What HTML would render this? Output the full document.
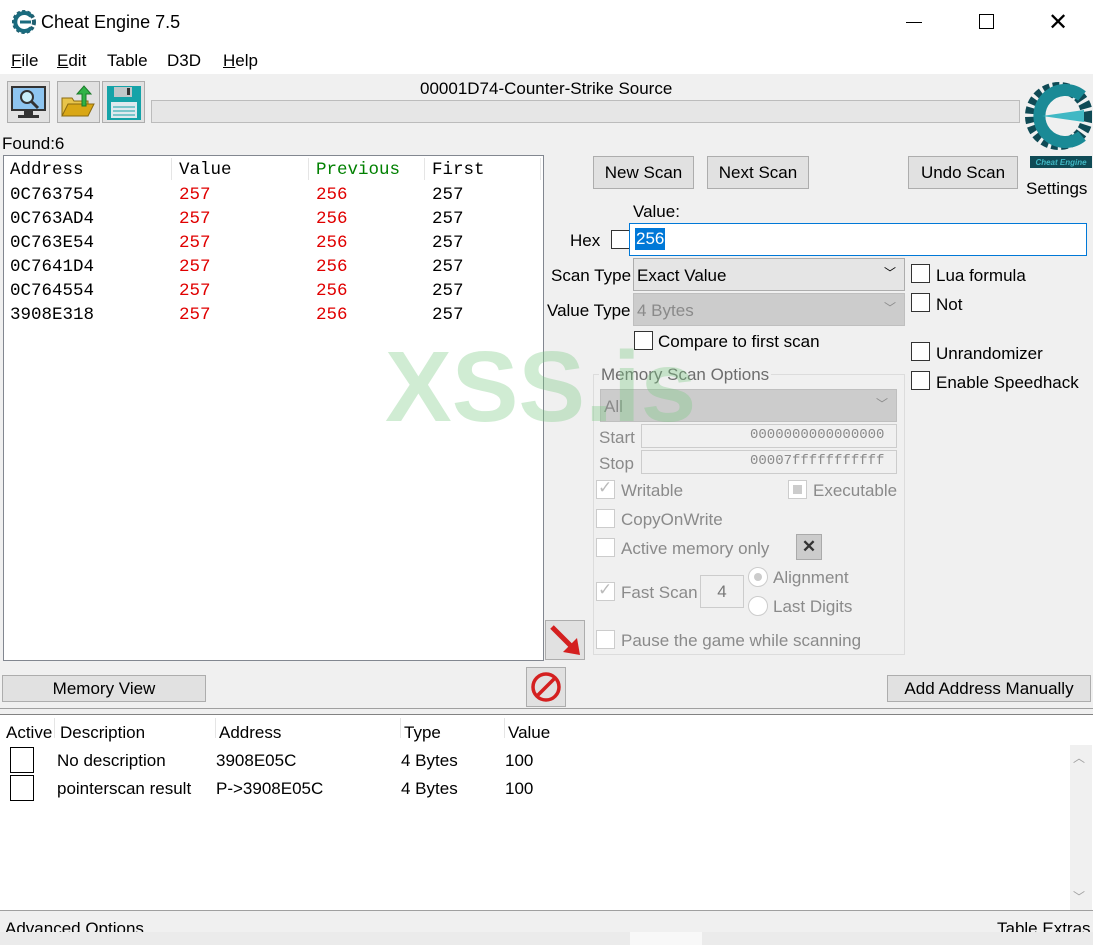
<!DOCTYPE html>
<html><head><meta charset="utf-8"><style>
*{margin:0;padding:0;box-sizing:border-box}
body{width:1093px;height:945px;background:#f0f0f0;font-family:"Liberation Sans",sans-serif;font-size:17px;color:#000;position:relative;overflow:hidden}
.a{position:absolute;white-space:nowrap}
.btn{position:absolute;background:#e1e1e1;border:1px solid #adadad;text-align:center}
.cb{position:absolute;width:19px;height:19px;border:1px solid #333;background:#fff}
.cbd{position:absolute;width:19px;height:19px;border:1px solid #ccc;background:#fff}
.g{color:#8a8a8a}
.mono{font-family:"Liberation Mono",monospace;font-size:17.5px}
</style></head><body>
<div class="a" style="left:0;top:0;width:1093px;height:74px;background:#fff"></div>
<svg class="a" style="left:12px;top:10px" width="24" height="24" viewBox="0 0 24 24"><circle cx="12" cy="12" r="10" fill="none" stroke="#1f5f70" stroke-width="4" stroke-dasharray="3 2"/><path d="M19 6 A9 9 0 1 0 19 18" fill="none" stroke="#1a6b7e" stroke-width="4"/><path d="M8 12 H19" stroke="#1a6b7e" stroke-width="3"/></svg>
<div class="a" style="left:41px;top:12px;font-size:18px">Cheat Engine 7.5</div>
<div class="a" style="left:906px;top:22px;width:16px;height:1px;background:#000"></div>
<div class="a" style="left:979px;top:14px;width:15px;height:15px;border:1px solid #000"></div>
<div class="a" style="left:1048px;top:8px;font-size:24px;font-weight:200">✕</div>
<div class="a" style="left:11px;top:51px"><u>F</u>ile</div>
<div class="a" style="left:57px;top:51px"><u>E</u>dit</div>
<div class="a" style="left:107px;top:51px">Table</div>
<div class="a" style="left:167px;top:51px">D3D</div>
<div class="a" style="left:223px;top:51px"><u>H</u>elp</div>
<div class="btn" style="left:7px;top:81px;width:43px;height:42px"></div>
<svg class="a" style="left:10px;top:84px" width="38" height="36"><rect x="2" y="3" width="33" height="23" fill="#8ec5f0" stroke="#333" stroke-width="2"/><rect x="14" y="26" width="9" height="5" fill="#333"/><rect x="8" y="31" width="21" height="3" fill="#333"/><circle cx="17" cy="13" r="6" fill="#c8eefa" stroke="#333" stroke-width="2"/><path d="M21 17 L28 24" stroke="#333" stroke-width="3"/></svg>
<div class="btn" style="left:57px;top:81px;width:43px;height:42px"></div>
<svg class="a" style="left:60px;top:84px" width="38" height="36"><path d="M2 14 H12 L14 17 H28 V32 H2Z" fill="#e8c44a" stroke="#8a6a10"/><path d="M2 32 L8 20 H34 L28 32Z" fill="#d9a715" stroke="#8a6a10"/><path d="M22 22 V10 H17 L24 2 L31 10 H26 V22Z" fill="#2fb347" stroke="#1a7a2a"/></svg>
<div class="btn" style="left:102px;top:81px;width:43px;height:42px"></div>
<svg class="a" style="left:106px;top:85px" width="36" height="36"><rect x="1" y="1" width="34" height="34" fill="#14a3a8"/><rect x="8" y="2" width="18" height="10" fill="#bfc7c9"/><rect x="21" y="3" width="3" height="7" fill="#333"/><rect x="5" y="17" width="26" height="16" fill="#dfe9ee"/><path d="M7 22H29M7 26H29M7 30H29" stroke="#14a3a8"/></svg>
<div class="a" style="left:420px;top:79px">00001D74-Counter-Strike Source</div>
<div class="a" style="left:151px;top:100px;width:869px;height:23px;background:#e6e6e6;border:1px solid #bcbcbc"></div>
<svg class="a" style="left:1022px;top:74px" width="70" height="100" viewBox="0 0 70 100"><circle cx="37" cy="42" r="28" fill="none" stroke="#0f4a55" stroke-width="12" stroke-dasharray="6 3"/><path d="M60 22 A26 26 0 1 0 60 62" fill="none" stroke="#1a8a96" stroke-width="12"/><path d="M20 42 L62 36 L62 48Z" fill="#40b8c4"/><rect x="8" y="82" width="62" height="12" fill="#0f4a55"/><text x="39" y="91" font-size="8" fill="#40b8c4" text-anchor="middle" font-style="italic" font-weight="bold">Cheat Engine</text></svg>
<div class="a" style="left:1026px;top:179px">Settings</div>
<div class="a" style="left:2px;top:134px">Found:6</div>
<div class="a" style="left:3px;top:155px;width:541px;height:506px;background:#fff;border:1px solid #828790"></div>
<div class="a" style="left:171px;top:158px;width:1px;height:22px;background:#e5e5e5"></div>
<div class="a" style="left:308px;top:158px;width:1px;height:22px;background:#e5e5e5"></div>
<div class="a" style="left:424px;top:158px;width:1px;height:22px;background:#e5e5e5"></div>
<div class="a" style="left:540px;top:158px;width:1px;height:22px;background:#e5e5e5"></div>
<div class="a mono" style="left:10px;top:160px">Address</div>
<div class="a mono" style="left:179px;top:160px">Value</div>
<div class="a mono" style="left:316px;top:160px;color:#008000">Previous</div>
<div class="a mono" style="left:432px;top:160px">First</div>
<div class="a mono" style="left:10px;top:183px;line-height:24px">0C763754<br>0C763AD4<br>0C763E54<br>0C7641D4<br>0C764554<br>3908E318</div>
<div class="a mono" style="left:179px;top:183px;line-height:24px;color:#e00000">257<br>257<br>257<br>257<br>257<br>257</div>
<div class="a mono" style="left:316px;top:183px;line-height:24px;color:#e00000">256<br>256<br>256<br>256<br>256<br>256</div>
<div class="a mono" style="left:432px;top:183px;line-height:24px">257<br>257<br>257<br>257<br>257<br>257</div>
<div class="btn" style="left:593px;top:156px;width:101px;height:33px;line-height:31px">New Scan</div>
<div class="btn" style="left:707px;top:156px;width:102px;height:33px;line-height:31px">Next Scan</div>
<div class="btn" style="left:908px;top:156px;width:110px;height:33px;line-height:31px">Undo Scan</div>
<div class="a" style="left:633px;top:202px">Value:</div>
<div class="a" style="left:570px;top:231px">Hex</div>
<div class="cb" style="left:611px;top:230px"></div>
<div class="a" style="left:629px;top:223px;width:458px;height:33px;background:#fff;border:1px solid #0078d7"></div>
<div class="a" style="left:635px;top:228px;background:#0078d7;color:#fff;padding:0 1px;line-height:22px">256</div>
<div class="a" style="left:551px;top:266px">Scan Type</div>
<div class="a" style="left:633px;top:258px;width:272px;height:33px;background:#e5e5e5;border:1px solid #adadad"></div>
<div class="a" style="left:637px;top:266px">Exact Value</div>
<div class="a" style="left:884px;top:264px;font-size:12px">﹀</div>
<div class="a" style="left:547px;top:301px">Value Type</div>
<div class="a" style="left:633px;top:293px;width:272px;height:33px;background:#ccc;border:1px solid #bfbfbf"></div>
<div class="a g" style="left:637px;top:301px">4 Bytes</div>
<div class="a g" style="left:884px;top:299px;font-size:12px">﹀</div>
<div class="cb" style="left:634px;top:331px"></div>
<div class="a" style="left:658px;top:332px">Compare to first scan</div>
<div class="cb" style="left:911px;top:264px"></div><div class="a" style="left:936px;top:266px">Lua formula</div>
<div class="cb" style="left:911px;top:293px"></div><div class="a" style="left:936px;top:295px">Not</div>
<div class="cb" style="left:911px;top:342px"></div><div class="a" style="left:936px;top:344px">Unrandomizer</div>
<div class="cb" style="left:911px;top:371px"></div><div class="a" style="left:936px;top:373px">Enable Speedhack</div>
<div class="a" style="left:593px;top:374px;width:312px;height:281px;border:1px solid #dcdcdc"></div>
<div class="a g" style="left:599px;top:365px;background:#f0f0f0;padding:0 2px;color:#6d6d6d">Memory Scan Options</div>
<div class="a" style="left:600px;top:389px;width:297px;height:33px;background:#ccc;border:1px solid #bfbfbf"></div>
<div class="a g" style="left:604px;top:397px">All</div>
<div class="a g" style="left:876px;top:395px;font-size:12px">﹀</div>
<div class="a g" style="left:599px;top:428px">Start</div>
<div class="a" style="left:641px;top:424px;width:256px;height:24px;border:1px solid #ccc"></div>
<div class="a mono g" style="left:750px;top:427px;font-size:14px">0000000000000000</div>
<div class="a g" style="left:599px;top:454px">Stop</div>
<div class="a" style="left:641px;top:450px;width:256px;height:24px;border:1px solid #ccc"></div>
<div class="a mono g" style="left:750px;top:453px;font-size:14px">00007fffffffffff</div>
<div class="cbd" style="left:596px;top:480px"></div><div class="a" style="left:598px;top:478px;color:#bbb">✓</div><div class="a g" style="left:621px;top:481px">Writable</div>
<div class="cbd" style="left:788px;top:480px"></div><div class="a" style="left:793px;top:485px;width:9px;height:9px;background:#ccc"></div><div class="a g" style="left:813px;top:481px">Executable</div>
<div class="cbd" style="left:596px;top:509px"></div><div class="a g" style="left:621px;top:510px">CopyOnWrite</div>
<div class="cbd" style="left:596px;top:538px"></div><div class="a g" style="left:621px;top:539px">Active memory only</div>
<div class="a" style="left:796px;top:534px;width:26px;height:26px;background:#ccc;border:1px solid #aaa;text-align:center;font-weight:bold;line-height:24px;color:#333">✕</div>
<div class="cbd" style="left:596px;top:582px"></div><div class="a" style="left:598px;top:580px;color:#bbb">✓</div><div class="a g" style="left:621px;top:583px">Fast Scan</div>
<div class="a" style="left:700px;top:575px;width:44px;height:33px;border:1px solid #ccc;text-align:center;line-height:31px;color:#777">4</div>
<div class="a" style="left:748px;top:567px;width:20px;height:20px;border-radius:50%;border:1px solid #ccc;background:#fff"></div><div class="a" style="left:754px;top:573px;width:8px;height:8px;border-radius:50%;background:#ccc"></div>
<div class="a g" style="left:773px;top:568px">Alignment</div>
<div class="a" style="left:748px;top:596px;width:20px;height:20px;border-radius:50%;border:1px solid #ccc;background:#fff"></div>
<div class="a g" style="left:773px;top:597px">Last Digits</div>
<div class="cbd" style="left:596px;top:630px"></div><div class="a g" style="left:621px;top:631px">Pause the game while scanning</div>
<div class="btn" style="left:545px;top:620px;width:40px;height:40px"></div>
<svg class="a" style="left:549px;top:624px" width="34" height="34"><path d="M3 3 L24 24" stroke="#d42020" stroke-width="5"/><path d="M31 31 L14 28 L28 14Z" fill="#d42020"/></svg>
<div class="btn" style="left:526px;top:667px;width:40px;height:40px"></div>
<svg class="a" style="left:529px;top:670px" width="34" height="34"><circle cx="17" cy="17" r="13" fill="none" stroke="#d42020" stroke-width="3.5"/><path d="M8 26 L26 8" stroke="#d42020" stroke-width="3.5"/></svg>
<div class="btn" style="left:2px;top:675px;width:204px;height:27px;line-height:26px">Memory View</div>
<div class="btn" style="left:887px;top:675px;width:204px;height:27px;line-height:26px">Add Address Manually</div>
<div class="a" style="left:0;top:708px;width:1093px;height:1px;background:#a0a0a0"></div>
<div class="a" style="left:0;top:714px;width:1093px;height:197px;background:#fff;border-top:1px solid #828282;border-bottom:1px solid #a0a0a0"></div>
<div class="a" style="left:1070px;top:745px;width:22px;height:165px;background:#f0f0f0"></div>
<div class="a" style="left:1073px;top:749px;color:#a0a0a0;font-size:12px">︿</div>
<div class="a" style="left:1073px;top:888px;color:#a0a0a0;font-size:12px">﹀</div>
<div class="a" style="left:6px;top:723px">Active</div>
<div class="a" style="left:60px;top:723px">Description</div>
<div class="a" style="left:219px;top:723px">Address</div>
<div class="a" style="left:404px;top:723px">Type</div>
<div class="a" style="left:508px;top:723px">Value</div>
<div class="a" style="left:54px;top:718px;width:1px;height:20px;background:#e5e5e5"></div>
<div class="a" style="left:215px;top:718px;width:1px;height:20px;background:#e5e5e5"></div>
<div class="a" style="left:400px;top:718px;width:1px;height:20px;background:#e5e5e5"></div>
<div class="a" style="left:504px;top:718px;width:1px;height:20px;background:#e5e5e5"></div>
<div class="a" style="left:10px;top:747px;width:24px;height:26px;border:1px solid #000"></div>
<div class="a" style="left:10px;top:775px;width:24px;height:26px;border:1px solid #000"></div>
<div class="a" style="left:57px;top:751px">No description</div>
<div class="a" style="left:216px;top:751px">3908E05C</div>
<div class="a" style="left:401px;top:751px">4 Bytes</div>
<div class="a" style="left:505px;top:751px">100</div>
<div class="a" style="left:57px;top:779px">pointerscan result</div>
<div class="a" style="left:216px;top:779px">P-&gt;3908E05C</div>
<div class="a" style="left:401px;top:779px">4 Bytes</div>
<div class="a" style="left:505px;top:779px">100</div>
<div class="a" style="left:5px;top:919px">Advanced Options</div>
<div class="a" style="left:997px;top:919px">Table Extras</div>
<div class="a" style="left:0;top:932px;width:1093px;height:13px;background:#ebebeb"></div>
<div class="a" style="left:630px;top:932px;width:72px;height:13px;background:#f8f8f8"></div>
<div class="a" style="left:385px;top:330px;font-size:100px;font-weight:bold;color:rgba(120,200,130,0.35);z-index:5">XSS.is</div>
</body></html>
